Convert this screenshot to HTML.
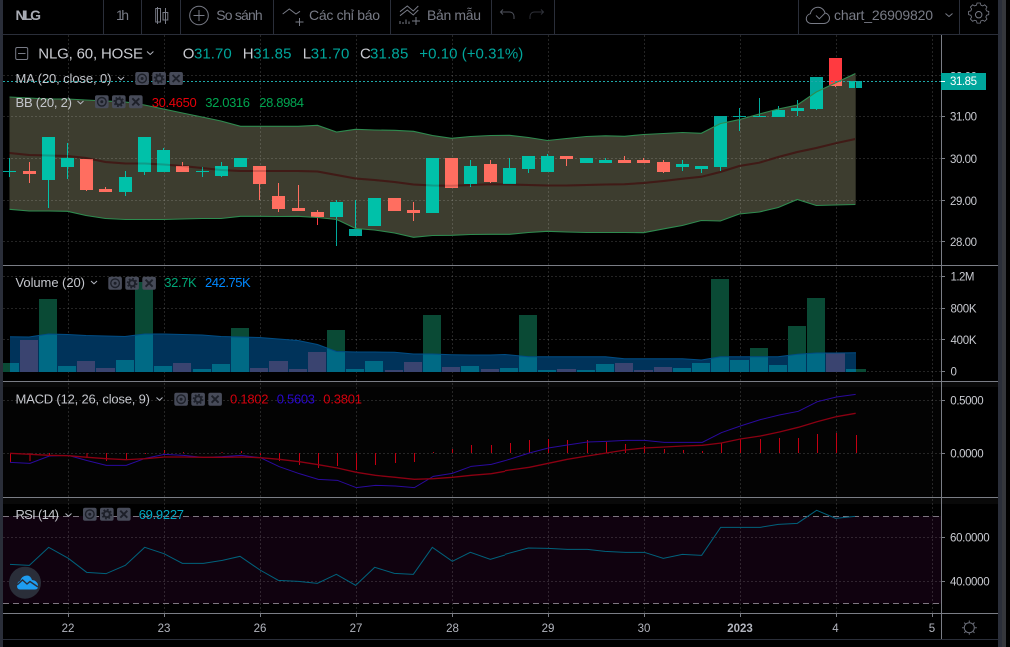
<!DOCTYPE html>
<html><head><meta charset="utf-8"><style>
html,body{margin:0;padding:0;background:#000;width:1010px;height:647px;overflow:hidden}
svg{display:block;position:absolute;left:0;top:0}
text{font-family:"Liberation Sans","DejaVu Sans",sans-serif;white-space:pre}
.g{fill:var(--g)}.r{fill:var(--r)}
.ax{font-size:11.5px;fill:#c8cad0}
.tm{font-size:11.5px;fill:#b2b5be;text-anchor:middle}
.lg{font-size:13px;fill:#c4c6cc}
.tb{font-size:14px;fill:#787b86}
.ic{fill:none;stroke:#787b86;stroke-width:1}
.ch{fill:none;stroke:#b2b5be;stroke-width:1}
.bg{fill:var(--g)}.bp{fill:var(--p)}
</style></head><body>
<svg width="1010" height="647" viewBox="0 0 1010 647" xmlns="http://www.w3.org/2000/svg">
<defs>
<clipPath id="bandc"><polygon points="9.5,97 29,98 48.5,99 67.5,99 86,100 105.5,101 125.5,102 144.5,105 163.5,109 182.5,113 202,117 221,121 240.5,126.3 259.5,126.3 278.5,126.3 298,126.3 317.5,125.3 336.5,132 355.5,129.3 374.5,130 394.5,130.3 413.5,131.3 432.5,135.5 451.5,138.3 470.5,136.5 490.5,135.5 509.5,135.3 528.5,137.5 547.5,140.5 566.5,138.5 586.5,136.5 605.5,135.8 624.5,136.3 643.5,134.5 663.5,133.5 682.5,132.5 701.3,133.3 720.3,123.6 739.3,119.6 759.3,114 778.3,109 797.3,105 816.3,92 835.3,83 855.5,73.5 855.5,204.5 835.3,205 816.3,205.5 797.3,199.5 778.3,207.5 759.3,212 739.3,214 720.3,221 701.3,220.5 682.3,225.5 670,227.7 643.5,232.7 624.5,232.5 605.5,232.5 586.5,232.5 566.5,232 547.5,231.3 528.5,232.5 509.5,234.3 490.5,234.3 470.5,234.5 451.5,235.3 432.5,235.5 413.5,237.3 394.5,233 374.5,230 355.5,228.5 340,221 336.5,219.5 317.5,217.5 298,216.3 278.5,216.5 259.5,216.3 240.5,216.3 221,218.5 202,218.5 182.5,219 163.5,219.5 144.5,219.5 125.5,219.5 105.5,218.5 86,215.5 67.5,211.3 48.5,211 29,211 9.5,209.3"/></clipPath>
<clipPath id="volc"><polygon points="10,336.7 29,337 48.5,334 67.5,334.5 86,335.5 105.5,336 125,336.5 144.5,334 163.5,334 182.5,334.5 202,335 221,336.5 240.5,337 259.5,337.5 278.5,339 298,340.5 317.5,344.5 336.5,351.5 355.5,352 374.5,352 394.5,352.3 413.5,354 432.5,354 451.5,354.7 470.5,355 490.5,355 505,354.5 528.5,356.7 547.5,356.7 566.5,356.7 586.5,356.7 605.5,356.7 624.5,358.7 643.5,358.7 663.5,358.7 682.5,358.7 701.5,360 720.5,356.7 739.5,356.7 759,356.7 778,356.7 797.5,354.3 816.5,353 835.5,353 856,352.7 856,372 10,372"/></clipPath>
<g id="candles">
<path class="g" d="M3 171h13v1h-13zM9 158h1v19h-1zM42 137h13V180h-13zM48 137h1V208h-1zM61 158h13V167h-13zM67 143h1V179h-1zM119 177h13V192h-13zM125 171h1V196h-1zM138 137h13V172h-13zM144 137h1V175h-1zM157 150h13V172h-13zM163 148h1V172h-1zM196 171h13v1h-13zM202 167h1V177h-1zM215 166h13V176h-13zM221 162h1V177h-1zM234 158h13V167h-13zM330 202h13V217h-13zM336 200h1V246h-1zM349 229h13V236h-13zM355 200h1V236h-1zM368 198h13V226h-13zM426 158h13V213h-13zM464 166h13V184h-13zM470 160h1V187h-1zM503 168h13V184h-13zM509 158h1V184h-1zM522 156h13V169h-13zM528 156h1V173h-1zM541 156h13V172h-13zM547 154h1V172h-1zM580 158h13V163h-13zM599 160h13V163h-13zM605 158h1V163h-1zM676 164h13V167h-13zM682 160h1V171h-1zM695 166h13V169h-13zM701 166h1V173h-1zM714 116h13V167h-13zM720 167h1v4h-1zM733 116h13v1h-13zM739 108h1V131h-1zM753 116h13v1h-13zM759 98h1V117h-1zM772 110h13V117h-13zM778 106h1V110h-1zM791 108h13V111h-13zM797 100h1V116h-1zM810 77h13V109h-13zM816 109h1v1h-1zM849 81h13V88h-13z"/>
<path class="r" d="M23 171h13v3h-13zM29 162h1V183h-1zM80 159h13V190h-13zM86 190h1v1h-1zM99 189h13V192h-13zM105 187h1V189h-1zM176 166h13V172h-13zM182 162h1V166h-1zM253 166h13V184h-13zM259 184h1V200h-1zM272 196h13V209h-13zM278 183h1V212h-1zM292 208h13V211h-13zM298 185h1V208h-1zM311 212h13V217h-13zM317 210h1V225h-1zM388 198h13V211h-13zM407 210h13V213h-13zM413 202h1V221h-1zM445 158h13V188h-13zM484 164h13V182h-13zM490 160h1V183h-1zM560 156h13V159h-13zM566 159h1V166h-1zM618 160h13V163h-13zM624 156h1V160h-1zM637 160h13V163h-13zM643 158h1V160h-1zM657 162h13V172h-13zM663 160h1V173h-1zM829 58h13V86h-13zM835 86h1v1h-1z"/>
</g>
<g id="bars">
<path class="bg" d="M3 363h16V372H3zM39 299h18V372h-18zM58 366h18V372h-18zM116 360h18V372h-18zM135 282h18V372h-18zM154 366h18V372h-18zM193 369h18V372h-18zM212 364h18V372h-18zM231 328h18V372h-18zM327 330h18V372h-18zM346 369h18V372h-18zM365 361h18V372h-18zM423 315h18V372h-18zM461 366h18V372h-18zM500 368h18V372h-18zM519 315h18V372h-18zM538 370h18V372h-18zM577 370h18V372h-18zM596 364h18V372h-18zM673 368h18V372h-18zM692 363h18V372h-18zM711 279h18V372h-18zM730 360h19V372h-19zM750 348h18V372h-18zM769 365h18V372h-18zM788 326h18V372h-18zM807 298h18V372h-18zM846 369h20V372h-20z"/>
<path class="bp" d="M20 340h18V372h-18zM77 361h18V372h-18zM96 368h19V372h-19zM173 363h18V372h-18zM250 368h18V372h-18zM269 361h19V372h-19zM289 369h18V372h-18zM308 352h18V372h-18zM385 370h18V372h-18zM404 362h18V372h-18zM442 367h18V372h-18zM481 369h18V372h-18zM557 369h19V372h-19zM615 363h18V372h-18zM634 370h19V372h-19zM654 367h18V372h-18zM826 353h19V372h-19z"/>
</g>
<g id="ib">
<rect x="0" y="0" width="13.6" height="13" rx="2" fill="#474b59"/>
<circle cx="6.8" cy="6.5" r="4.3" fill="none" stroke="#1d2029" stroke-width="1.4"/><circle cx="6.8" cy="6.5" r="1.5" fill="#1d2029"/>
<rect x="17" y="0" width="13.6" height="13" rx="2" fill="#474b59"/>
<circle cx="23.8" cy="6.5" r="3" fill="none" stroke="#1d2029" stroke-width="2"/><circle cx="23.8" cy="6.5" r="4.6" fill="none" stroke="#1d2029" stroke-width="1.5" stroke-dasharray="1.8 1.8"/>
<rect x="34" y="0" width="13.6" height="13" rx="2" fill="#474b59"/>
<path d="M37.3 3l7 7M44.3 3l-7 7" stroke="#1d2029" stroke-width="1.9" fill="none"/>
</g>
</defs>

<!-- chrome -->
<rect width="1010" height="647" fill="#000"/>
<rect x="0" y="0" width="3" height="647" fill="#2a2e39"/>
<rect x="998" y="0" width="4" height="647" fill="#2a2e39"/>
<rect x="1002" y="0" width="4" height="647" fill="#35373c"/>
<rect x="3" y="382" width="938" height="115" fill="#030303"/>
<rect x="3" y="382" width="995" height="5" fill="#090909"/>
<rect x="3" y="498" width="995" height="6" fill="#090909"/>

<!-- band -->
<polygon fill="#3d3d2f" points="9.5,97 29,98 48.5,99 67.5,99 86,100 105.5,101 125.5,102 144.5,105 163.5,109 182.5,113 202,117 221,121 240.5,126.3 259.5,126.3 278.5,126.3 298,126.3 317.5,125.3 336.5,132 355.5,129.3 374.5,130 394.5,130.3 413.5,131.3 432.5,135.5 451.5,138.3 470.5,136.5 490.5,135.5 509.5,135.3 528.5,137.5 547.5,140.5 566.5,138.5 586.5,136.5 605.5,135.8 624.5,136.3 643.5,134.5 663.5,133.5 682.5,132.5 701.3,133.3 720.3,123.6 739.3,119.6 759.3,114 778.3,109 797.3,105 816.3,92 835.3,83 855.5,73.5 855.5,204.5 835.3,205 816.3,205.5 797.3,199.5 778.3,207.5 759.3,212 739.3,214 720.3,221 701.3,220.5 682.3,225.5 670,227.7 643.5,232.7 624.5,232.5 605.5,232.5 586.5,232.5 566.5,232 547.5,231.3 528.5,232.5 509.5,234.3 490.5,234.3 470.5,234.5 451.5,235.3 432.5,235.5 413.5,237.3 394.5,233 374.5,230 355.5,228.5 340,221 336.5,219.5 317.5,217.5 298,216.3 278.5,216.5 259.5,216.3 240.5,216.3 221,218.5 202,218.5 182.5,219 163.5,219.5 144.5,219.5 125.5,219.5 105.5,218.5 86,215.5 67.5,211.3 48.5,211 29,211 9.5,209.3"/>

<!-- rsi bg -->
<rect x="3" y="516" width="938" height="87.5" fill="#10020f"/>

<!-- grid -->
<g fill="none" stroke="rgba(255,255,255,.14)" stroke-width="1" stroke-dasharray="2 2">
<path d="M68.5 35V613M164.5 35V613M260.5 35V613M356.5 35V613M452.5 35V613M548.5 35V613M644.5 35V613M740.5 35V613M836.5 35V613M932.5 35V613"/>
<path d="M3 75.5H941M3 116.5H941M3 158.5H941M3 200.5H941M3 241.5H941M3 276.5H941M3 308.5H941M3 339.5H941M3 371.5H941M3 400.5H941M3 453.5H941M3 537.5H941M3 581.5H941"/>
</g>

<!-- mid line under candles -->
<polyline fill="none" stroke="#411a16" stroke-width="2" points="9.5,153 29,155 48.5,155.5 67.5,156 86,158 105.5,162 125.5,163.5 144.5,163.5 163.5,164.5 182.5,166 202,168 221,170 240.5,171 259.5,171 278.5,171 298,171 317.5,171.5 336.5,175 355.5,178.5 374.5,180 394.5,182 413.5,184.5 432.5,185.5 451.5,185.8 470.5,185 490.5,184.3 509.5,184.5 528.5,185 547.5,185.5 566.5,185.5 586.5,185 605.5,184.5 624.5,184.2 643.5,183 663.5,181 682.3,178.7 701.3,176.8 720.3,172 739.3,166 759.3,162.7 778.3,157 797.3,152 816.3,148 835.3,143.3 855.3,139"/>

<!-- candles -->
<use href="#candles" style="--g:#00a99c;--r:#ff3a40"/>
<g clip-path="url(#bandc)"><use href="#candles" style="--g:#00c1a9;--r:#ff6e60"/></g>

<polyline fill="none" stroke="#411a16" stroke-opacity=".22" stroke-width="2" points="9.5,153 29,155 48.5,155.5 67.5,156 86,158 105.5,162 125.5,163.5 144.5,163.5 163.5,164.5 182.5,166 202,168 221,170 240.5,171 259.5,171 278.5,171 298,171 317.5,171.5 336.5,175 355.5,178.5 374.5,180 394.5,182 413.5,184.5 432.5,185.5 451.5,185.8 470.5,185 490.5,184.3 509.5,184.5 528.5,185 547.5,185.5 566.5,185.5 586.5,185 605.5,184.5 624.5,184.2 643.5,183 663.5,181 682.3,178.7 701.3,176.8 720.3,172 739.3,166 759.3,162.7 778.3,157 797.3,152 816.3,148 835.3,143.3 855.3,139"/>

<!-- band lines -->
<polyline fill="none" stroke="#2e8b4f" stroke-width="1.1" points="9.5,97 29,98 48.5,99 67.5,99 86,100 105.5,101 125.5,102 144.5,105 163.5,109 182.5,113 202,117 221,121 240.5,126.3 259.5,126.3 278.5,126.3 298,126.3 317.5,125.3 336.5,132 355.5,129.3 374.5,130 394.5,130.3 413.5,131.3 432.5,135.5 451.5,138.3 470.5,136.5 490.5,135.5 509.5,135.3 528.5,137.5 547.5,140.5 566.5,138.5 586.5,136.5 605.5,135.8 624.5,136.3 643.5,134.5 663.5,133.5 682.5,132.5 701.3,133.3 720.3,123.6 739.3,119.6 759.3,114 778.3,109 797.3,105 816.3,92 835.3,83 855.5,73.5"/>
<polyline fill="none" stroke="#2e8b4f" stroke-width="1.1" points="9.5,209.3 29,211 48.5,211 67.5,211.3 86,215.5 105.5,218.5 125.5,219.5 144.5,219.5 163.5,219.5 182.5,219 202,218.5 221,218.5 240.5,216.3 259.5,216.3 278.5,216.5 298,216.3 317.5,217.5 336.5,219.5 340,221 355.5,228.5 374.5,230 394.5,233 413.5,237.3 432.5,235.5 451.5,235.3 470.5,234.5 490.5,234.3 509.5,234.3 528.5,232.5 547.5,231.3 566.5,232 586.5,232.5 605.5,232.5 624.5,232.5 643.5,232.7 670,227.7 682.3,225.5 701.3,220.5 720.3,221 739.3,214 759.3,212 778.3,207.5 797.3,199.5 816.3,205.5 835.3,205 855.5,204.5"/>
<path d="M855.5 73.5V204.5" stroke="#2a2a20" fill="none"/>

<!-- price line -->
<path d="M3 81.5H941" stroke="#1fa7a7" stroke-width="1" stroke-dasharray="2 2" fill="none"/>

<!-- volume -->
<g style="--g:#0a4a35;--p:#0a4a35"><use href="#bars"/></g>
<polygon fill="#00335a" points="10,336.7 29,337 48.5,334 67.5,334.5 86,335.5 105.5,336 125,336.5 144.5,334 163.5,334 182.5,334.5 202,335 221,336.5 240.5,337 259.5,337.5 278.5,339 298,340.5 317.5,344.5 336.5,351.5 355.5,352 374.5,352 394.5,352.3 413.5,354 432.5,354 451.5,354.7 470.5,355 490.5,355 505,354.5 528.5,356.7 547.5,356.7 566.5,356.7 586.5,356.7 605.5,356.7 624.5,358.7 643.5,358.7 663.5,358.7 682.5,358.7 701.5,360 720.5,356.7 739.5,356.7 759,356.7 778,356.7 797.5,354.3 816.5,353 835.5,353 856,352.7 856,372 10,372"/>
<g clip-path="url(#volc)" style="--g:#006a85;--p:#3a4470"><use href="#bars"/></g>
<polyline fill="none" stroke="#004d85" stroke-width="1" points="10,336.7 29,337 48.5,334 67.5,334.5 86,335.5 105.5,336 125,336.5 144.5,334 163.5,334 182.5,334.5 202,335 221,336.5 240.5,337 259.5,337.5 278.5,339 298,340.5 317.5,344.5 336.5,351.5 355.5,352 374.5,352 394.5,352.3 413.5,354 432.5,354 451.5,354.7 470.5,355 490.5,355 505,354.5 528.5,356.7 547.5,356.7 566.5,356.7 586.5,356.7 605.5,356.7 624.5,358.7 643.5,358.7 663.5,358.7 682.5,358.7 701.5,360 720.5,356.7 739.5,356.7 759,356.7 778,356.7 797.5,354.3 816.5,353 835.5,353 856,352.7"/>

<!-- macd -->
<path fill="none" stroke="#c40012" stroke-width="1" d="M10.5 453V462M30 453V461M49.5 453V455M87 453V458M106.5 453V461M126.5 453V460M145.5 453V454M164.5 453V450M183.5 453V452M222 453V452M241.5 453V451M260.5 453V455M279.5 453V461M299.5 453V465M318.5 453V468M337.5 453V466M356.5 453V470M375.5 453V465M395.5 453V463M414.5 453V462M433.5 453V452M452.5 453V449M471.5 453V445M491.5 453V445M510.5 453V443M529.5 453V440M548.5 453V439M567.5 453V440M587.5 453V440M606.5 453V442M625.5 453V444M644.5 453V446M664.5 453V449M683.5 453V450M702.5 453V451M721.5 453V443M740.5 453V439M760.5 453V439M779.5 453V438M798.5 453V438M817.5 453V434M836.5 453V433M856.5 453V435"/>
<g fill="none" stroke-width="3">
<polyline transform="translate(0 380) scale(.33333)" stroke="#2a0a9e" points="30,247 90,250 148,228 205,226 262,242 319,256 379,256 436,235 493,223 550,226 610,232 667,230 724,226 781,233 838,260 898,281 955,298 1012,301 1069,323 1126,316 1186,318 1243,323 1300,289 1357,280 1414,259 1474,253 1515,242"/>
<polyline transform="translate(505 380) scale(.33333)" stroke="#2a0a9e" points="0,242 73,219 130,204 187,195 247,186 304,184 361,181 418,181 478,187 535,187 592,187 649,158 706,138 766,119 823,105 880,94 937,65 994,51 1052,43"/>
<polyline transform="translate(0 380) scale(.33333)" stroke="#8b0012" stroke-width="4" points="30,220 90,223 148,226 205,227 262,232 319,236 379,239 436,236 493,231 550,231 610,232 667,232 724,231 781,233 838,238 898,245 955,254 1012,264 1069,277 1126,286 1186,292 1243,298 1300,296 1357,292 1414,286 1474,281 1515,274"/>
<polyline transform="translate(505 380) scale(.33333)" stroke="#8b0012" stroke-width="4" points="0,272 73,262 130,250 187,238 247,228 304,219 361,210 418,204 478,201 535,198 592,196 649,189 706,177 766,168 823,156 880,142 937,125 994,110 1052,100"/>
</g>

<!-- rsi -->
<g fill="none" stroke="#7d7680" stroke-width="1" stroke-dasharray="6 4"><path d="M3 516.5H941M3 603.5H941"/></g>
<g fill="none" stroke="#00627c" stroke-width="3">
<polyline transform="translate(0 495) scale(.33333)" points="30,208 88,211 146,157 205,190 260,232 318,236 376,211 434,157 492,176 547,205 610,205 667,196 720,184 780,225 835,256 895,259 952,265 1009,238 1067,271 1124,217 1183,235 1240,238 1297,157 1357,199 1411,172 1471,193 1515,180"/>
<polyline transform="translate(505 495) scale(.33333)" points="0,178 70,159 130,160 187,163 247,163 300,169 361,172 418,172 475,190 532,178 590,181 647,97 706,97 766,97 820,88 877,85 935,46 992,70 1050,64"/>
</g>

<!-- separators -->
<g fill="none" stroke="#7a7d85" stroke-width="1">
<path d="M3 265.5H998M3 381.5H998M3 497.5H998M3 613.5H998M941.5 35V639"/>
<path d="M68.5 613V617M164.5 613V617M260.5 613V617M356.5 613V617M452.5 613V617M548.5 613V617M644.5 613V617M740.5 613V617M836.5 613V617M932.5 613V617"/>
<path d="M941 116.5H945M941 158.5H945M941 200.5H945M941 241.5H945M941 276.5H945M941 308.5H945M941 339.5H945M941 371.5H945M941 400.5H945M941 453.5H945M941 537.5H945M941 581.5H945"/>
</g>
<path d="M3 639.5H998M3 34.5H998" stroke="#2a2e39" fill="none"/>
<path d="M103.5 0V34M141.5 0V34M180.5 0V34M273.5 0V34M390.5 0V34M491.5 0V34M554.5 0V34M798.5 0V34M959.5 0V34" stroke="#2a2e39" fill="none"/>

<!-- toolbar text -->
<text x="15.5" y="20" font-weight="700" fill="#a9acb4" textLength="25.5" style="font-size:14px">NLG</text>
<text class="tb" x="116" y="20" textLength="13">1h</text>
<text class="tb" x="216.3" y="20" textLength="46.4">So sánh</text>
<text class="tb" x="309" y="20" textLength="71">Các chỉ báo</text>
<text class="tb" x="427" y="20" textLength="54">Bản mẫu</text>
<text class="tb" x="834" y="20" textLength="99">chart_26909820</text>

<!-- toolbar icons -->
<g class="ic">
<path d="M157.5 7V24M155.7 8.500h4.800V22h-4.800zM165.500 8V24M163 12.500h4.800V20H163z"/>
<circle cx="199" cy="15.500" r="9.300"/><path d="M199 10V21M193.500 15.500H204.500"/>
<path d="M282.700 14L289.300 9L296 14L300 11.300M299.500 18V26M295.500 22H303.500"/>
<path d="M400 11.700L407.300 6L413.300 11L418.300 6M400 15.700L407.300 10L413.300 15L418.300 10M400 24V21M403 24V22M406 24V19.500M409 24V21.500M416 17V25M412 21H420"/>
<path d="M816 15.500l3.300 3.300 6-6"/>
<path d="M811.500 23.500h12.500c3 0 5.500-2.400 5.500-5.300 0-2.600-2-4.800-4.500-5.200C824.200 9.600 821.200 7.300 818 7.300c-3.800 0-7 2.800-7.600 6.400-2.400.6-4.100 2.600-4.100 5 0 2.700 2.200 4.800 5.200 4.800z"/>
<path d="M945.500 13.500l3.500 3 3.500-3"/>
<circle cx="978.700" cy="14.700" r="3.200"/>
<path d="M976.700 5h4l.7 2.700 2.200.9 2.400-1.400 2.800 2.800-1.400 2.400.9 2.200 2.700.7v4l-2.700.7-.9 2.200 1.400 2.400-2.800 2.800-2.400-1.400-2.200.9-.7 2.700h-4l-.7-2.700-2.200-.9-2.400 1.400-2.800-2.800 1.400-2.400-.9-2.200-2.700-.7v-4l2.700-.7.9-2.200-1.400-2.400 2.800-2.800 2.400 1.400 2.200-.9z" transform="translate(0 -4.600) translate(978.700 19.300) scale(.82) translate(-978.700 -19.300)"/>
<circle cx="969.300" cy="627.700" r="5" stroke="#6a6d78"/>
<path d="M969.300 620.500v2M969.300 632.700v2M962 627.700h2.300M974.600 627.700h2.300M964.200 622.600l1.500 1.500M973 631.400l1.500 1.500M964.200 632.900l1.500-1.500M973 624l1.500-1.500" stroke="#6a6d78"/>
</g>
<path d="M503 9.500l-2.500 2.500 2.500 2.500M501 12h8.500c2.800 0 4.500 2 4.500 4.500V19" fill="none" stroke="#4f525c"/>
<path d="M541 9.500l2.500 2.500-2.500 2.500M543 12h-8.500c-2.800 0-4.500 2-4.500 4.500V19" fill="none" stroke="#2f3139"/>

<!-- main legend -->
<rect x="15.700" y="47.500" width="12" height="12" rx="1.500" fill="none" stroke="#787b86"/>
<path d="M18 53.500H25.500" stroke="#787b86"/>
<text x="38.300" y="58.300" textLength="104.700" style="font-size:15px;fill:#c9cbd1">NLG, 60, HOSE</text>
<path class="ch" d="M147 51.500l3.200 3 3.200-3"/>
<g style="font-size:15px;fill:#00a69c">
<text x="182.700" y="58.300" style="fill:#c9cbd1">O</text><text x="194" y="58.300" textLength="37.700">31.70</text>
<text x="242.700" y="58.300" style="fill:#c9cbd1">H</text><text x="253.300" y="58.300" textLength="38.200">31.85</text>
<text x="302.700" y="58.300" style="fill:#c9cbd1">L</text><text x="310.700" y="58.300" textLength="38.600">31.70</text>
<text x="360" y="58.300" style="fill:#c9cbd1">C</text><text x="370" y="58.300" textLength="38.300">31.85</text>
<text x="419.300" y="58.300" textLength="104">+0.10 (+0.31%)</text>
</g>

<!-- MA -->
<text class="lg" x="15.500" y="83" textLength="96">MA (20, close, 0)</text>
<path class="ch" d="M118 77l3 2.800 3-2.800"/>
<use href="#ib" x="135.300" y="72"/>

<!-- BB -->
<text class="lg" x="15.500" y="107" textLength="56.500">BB (20, 2)</text>
<path class="ch" d="M77.500 101l3 2.800 3-2.800"/>
<use href="#ib" x="95" y="95.300"/>
<text class="lg" x="151.700" y="107" textLength="45" style="fill:#e6000a">30.4650</text>
<text class="lg" x="205.300" y="107" textLength="44.700" style="fill:#00a651">32.0316</text>
<text class="lg" x="259.300" y="107" textLength="44.700" style="fill:#00a651">28.8984</text>

<!-- Volume -->
<text class="lg" x="15.500" y="287" textLength="69.500">Volume (20)</text>
<path class="ch" d="M91 281l3 2.800 3-2.800"/>
<use href="#ib" x="108.300" y="276.700"/>
<text class="lg" x="164.300" y="287" textLength="32.400" style="fill:#00a676">32.7K</text>
<text class="lg" x="205" y="287" textLength="45.700" style="fill:#0088ff">242.75K</text>

<!-- MACD -->
<text class="lg" x="15.500" y="403.300" textLength="134.500">MACD (12, 26, close, 9)</text>
<path class="ch" d="M156.500 397.500l3 2.800 3-2.800"/>
<use href="#ib" x="174.300" y="392.700"/>
<text class="lg" x="230" y="403.300" textLength="38.500" style="fill:#d4000c">0.1802</text>
<text class="lg" x="276.700" y="403.300" textLength="38.300" style="fill:#2a08d0">0.5603</text>
<text class="lg" x="323.300" y="403.300" textLength="38.700" style="fill:#d4000c">0.3801</text>

<!-- RSI -->
<text class="lg" x="15.500" y="519" textLength="43.500">RSI (14)</text>
<path class="ch" d="M65.500 513.500l3 2.800 3-2.800"/>
<use href="#ib" x="83" y="507.700"/>
<text class="lg" x="138.700" y="519" textLength="45.300" style="fill:#00a9c4">69.9227</text>

<!-- logo -->
<circle cx="25" cy="582.700" r="16" fill="#2a2e39"/>
<path d="M17 585.500Q17.500 581.500 20 581Q22 575.500 27 575.500Q30.500 575.500 32 580Q37.500 580.500 38 585.500Q38.500 589.500 35 589.500H20Q17 589.500 17 585.500z" fill="#1e9df1"/>
<path d="M17 585L22.500 580L27 584L30 581.500L38 587" fill="none" stroke="#2a2e39" stroke-width="1.400"/>

<!-- axis labels -->
<text class="ax" x="950" y="80.500" textLength="27">32.00</text>
<rect x="941" y="73" width="45" height="17" fill="#00a69c"/>
<path d="M941 81.500H945" stroke="#fff"/>
<text class="ax" x="950" y="85" textLength="27" style="fill:#fff">31.85</text>
<text class="ax" x="950" y="120.700" textLength="27">31.00</text>
<text class="ax" x="950" y="163" textLength="27">30.00</text>
<text class="ax" x="950" y="205" textLength="27">29.00</text>
<text class="ax" x="950" y="246" textLength="27">28.00</text>
<text class="ax" x="950.500" y="280.700" textLength="24">1.2M</text>
<text class="ax" x="950.500" y="312.700" textLength="26">800K</text>
<text class="ax" x="950.500" y="344" textLength="26">400K</text>
<text class="ax" x="950.500" y="375.700">0</text>
<text class="ax" x="950.300" y="404.700" textLength="33.300">0.5000</text>
<text class="ax" x="950.300" y="457.700" textLength="33.300">0.0000</text>
<text class="ax" x="950" y="541.700" textLength="39.600">60.0000</text>
<text class="ax" x="950" y="585.700" textLength="39.600">40.0000</text>

<text class="tm" x="68" y="632">22</text>
<text class="tm" x="164" y="632">23</text>
<text class="tm" x="260" y="632">26</text>
<text class="tm" x="356" y="632">27</text>
<text class="tm" x="452.500" y="632">28</text>
<text class="tm" x="548" y="632">29</text>
<text class="tm" x="644" y="632">30</text>
<text class="tm" x="740" y="632" style="font-weight:700">2023</text>
<text class="tm" x="835.500" y="632">4</text>
<text class="tm" x="932" y="632">5</text>
</svg>
</body></html>
